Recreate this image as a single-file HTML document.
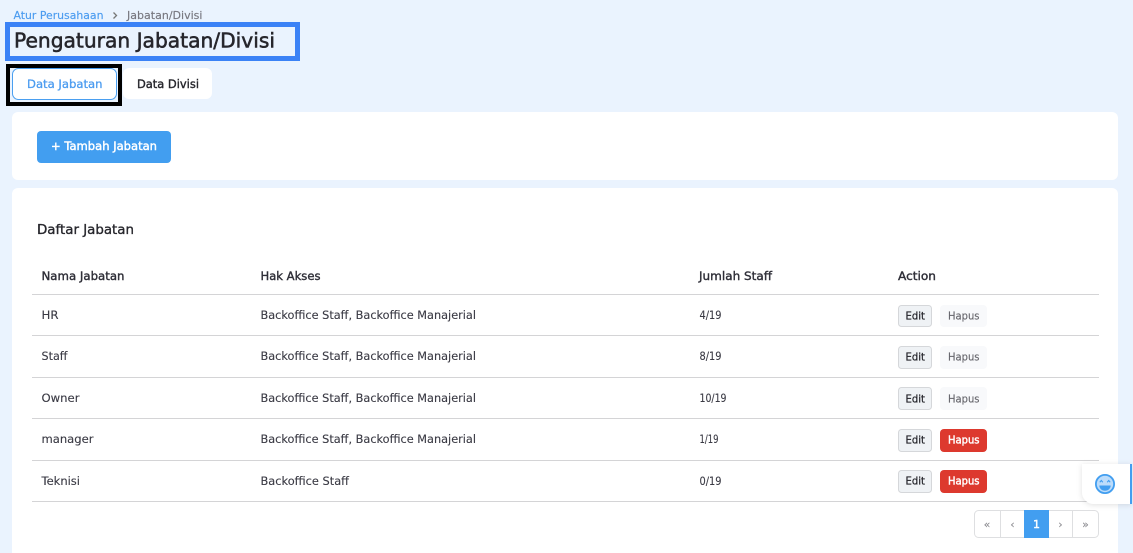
<!DOCTYPE html>
<html><head><meta charset="utf-8"><style>
html,body{margin:0;padding:0;width:1133px;height:553px;overflow:hidden;background:#eaf3fe}
svg{display:block}
text{font-family:"DejaVu Sans","Liberation Sans",sans-serif;font-size:11.5px;fill:#3a3a44;stroke:#3a3a44;stroke-width:.12px}
.h{fill:#2f2f38;stroke:#2f2f38;stroke-width:.38px;font-size:11.5px}
.w{fill:#fff;stroke:#fff;stroke-width:.42px;font-size:11.5px}
.b{fill:#4c9cf0;stroke:#4c9cf0;stroke-width:.3px;font-size:11.5px}
.g{font-size:10.5px;fill:#66666c;stroke:#66666c;stroke-width:.15px}
.e{font-size:11px;fill:#26262c;stroke:#26262c;stroke-width:.25px}
.p{font-size:11px;fill:#8b8b90;stroke:#8b8b90;stroke-width:.1px}
</style></head><body>
<svg width="1133" height="553" viewBox="0 0 1133 553" xmlns="http://www.w3.org/2000/svg">
<defs><filter id="s" x="-30%" y="-30%" width="160%" height="160%"><feDropShadow dx="0" dy="1" stdDeviation="3" flood-color="#000" flood-opacity=".12"/></filter></defs>
<rect width="1133" height="553" fill="#eaf3fe"/>
<text x="13.500" y="19" style="font-size:10.500px;fill:#4c9cf0;stroke:#4c9cf0;stroke-width:.15px" textLength="90" lengthAdjust="spacingAndGlyphs">Atur Perusahaan</text>
<path d="M113.500 12.500l3 3-3 3" fill="none" stroke="#777" stroke-width="1.300"/>
<text x="127" y="19" style="font-size:10.500px;fill:#77777f;stroke:#77777f;stroke-width:.15px" textLength="75.500" lengthAdjust="spacingAndGlyphs">Jabatan/Divisi</text>
<rect x="7.500" y="24.500" width="290" height="34" fill="none" stroke="#3b82f6" stroke-width="5"/>
<text x="14" y="47.500" style="font-size:20.500px;fill:#26262c;stroke:#26262c;stroke-width:.55px" textLength="261" lengthAdjust="spacingAndGlyphs">Pengaturan Jabatan/Divisi</text>
<rect x="8" y="66" width="112" height="38" fill="none" stroke="#000" stroke-width="4"/>
<rect x="12.500" y="68.500" width="104" height="31" rx="6" fill="#fff" stroke="#4a9ff0"/>
<text x="27" y="88" class="b" textLength="75.500" lengthAdjust="spacingAndGlyphs">Data Jabatan</text>
<rect x="123" y="68" width="89" height="31" rx="6" fill="#fff"/>
<text x="137" y="88" class="h" style="fill:#26262c;stroke:#26262c" textLength="62" lengthAdjust="spacingAndGlyphs">Data Divisi</text>
<rect x="12" y="112" width="1106" height="68" rx="6" fill="#fff"/>
<rect x="37" y="131" width="134" height="32" rx="4" fill="#429ef0"/>
<text x="51" y="150" class="w" textLength="106" lengthAdjust="spacingAndGlyphs">+ Tambah Jabatan</text>
<rect x="12" y="188" width="1106" height="380" rx="6" fill="#fff"/>
<text x="37" y="234" style="font-size:13.500px;fill:#26262c;stroke:#26262c;stroke-width:.35px" textLength="97" lengthAdjust="spacingAndGlyphs">Daftar Jabatan</text>
<g>
<text x="41.500" y="280" class="h" textLength="83" lengthAdjust="spacingAndGlyphs">Nama Jabatan</text>
<text x="260.500" y="280" class="h" textLength="60" lengthAdjust="spacingAndGlyphs">Hak Akses</text>
<text x="699" y="280" class="h" textLength="73" lengthAdjust="spacingAndGlyphs">Jumlah Staff</text>
<text x="898" y="280" class="h" textLength="38" lengthAdjust="spacingAndGlyphs">Action</text>
</g>
<g stroke="#d4d4d6" stroke-width="1">
<path d="M32 294.500H1099M32 335.500H1099M32 377.500H1099M32 418.500H1099M32 460.500H1099M32 501.500H1099"/>
</g>
<text x="41.500" y="319" textLength="17" lengthAdjust="spacingAndGlyphs">HR</text>
<text x="260.500" y="319" textLength="215.500" lengthAdjust="spacingAndGlyphs">Backoffice Staff, Backoffice Manajerial</text>
<text x="699.500" y="319" textLength="22" lengthAdjust="spacingAndGlyphs">4/19</text>
<text x="41.500" y="360" textLength="26" lengthAdjust="spacingAndGlyphs">Staff</text>
<text x="260.500" y="360" textLength="215.500" lengthAdjust="spacingAndGlyphs">Backoffice Staff, Backoffice Manajerial</text>
<text x="699.500" y="360" textLength="22" lengthAdjust="spacingAndGlyphs">8/19</text>
<text x="41.500" y="402" textLength="38" lengthAdjust="spacingAndGlyphs">Owner</text>
<text x="260.500" y="402" textLength="215.500" lengthAdjust="spacingAndGlyphs">Backoffice Staff, Backoffice Manajerial</text>
<text x="699.500" y="402" textLength="27" lengthAdjust="spacingAndGlyphs">10/19</text>
<text x="41.500" y="443" textLength="52" lengthAdjust="spacingAndGlyphs">manager</text>
<text x="260.500" y="443" textLength="215.500" lengthAdjust="spacingAndGlyphs">Backoffice Staff, Backoffice Manajerial</text>
<text x="699.500" y="443" textLength="19" lengthAdjust="spacingAndGlyphs">1/19</text>
<text x="41.500" y="485" textLength="38.500" lengthAdjust="spacingAndGlyphs">Teknisi</text>
<text x="260.500" y="485" textLength="88.500" lengthAdjust="spacingAndGlyphs">Backoffice Staff</text>
<text x="699.500" y="485" textLength="22" lengthAdjust="spacingAndGlyphs">0/19</text>
<g fill="#eff2f5" stroke="#d5d7da">
<rect x="898.500" y="305.500" width="33" height="21" rx="3"/>
<rect x="898.500" y="346.500" width="33" height="22" rx="3"/>
<rect x="898.500" y="387.500" width="33" height="22" rx="3"/>
<rect x="898.500" y="429.500" width="33" height="22" rx="3"/>
<rect x="898.500" y="470.500" width="33" height="22" rx="3"/>
</g>
<text x="905.500" y="319.500" class="e" textLength="19.500" lengthAdjust="spacingAndGlyphs">Edit</text>
<text x="905.500" y="360.500" class="e" textLength="19.500" lengthAdjust="spacingAndGlyphs">Edit</text>
<text x="905.500" y="402.500" class="e" textLength="19.500" lengthAdjust="spacingAndGlyphs">Edit</text>
<text x="905.500" y="443.500" class="e" textLength="19.500" lengthAdjust="spacingAndGlyphs">Edit</text>
<text x="905.500" y="484.500" class="e" textLength="19.500" lengthAdjust="spacingAndGlyphs">Edit</text>
<g fill="#f8f9fb">
<rect x="940" y="305" width="47" height="22" rx="4"/>
<rect x="940" y="346" width="47" height="23" rx="4"/>
<rect x="940" y="387" width="47" height="23" rx="4"/>
</g>
<g fill="#dd392e">
<rect x="940" y="429" width="47" height="23" rx="4"/>
<rect x="940" y="470" width="47" height="23" rx="4"/>
</g>
<text x="948" y="319.500" class="g" textLength="31.500" lengthAdjust="spacingAndGlyphs">Hapus</text>
<text x="948" y="360.500" class="g" textLength="31.500" lengthAdjust="spacingAndGlyphs">Hapus</text>
<text x="948" y="402.500" class="g" textLength="31.500" lengthAdjust="spacingAndGlyphs">Hapus</text>
<text x="948" y="443.500" class="w" style="font-size:10.500px" textLength="31.500" lengthAdjust="spacingAndGlyphs">Hapus</text>
<text x="948" y="484.500" class="w" style="font-size:10.500px" textLength="31.500" lengthAdjust="spacingAndGlyphs">Hapus</text>
<rect x="974.500" y="510.500" width="124" height="27" rx="4" fill="#fff" stroke="#dedfe1"/>
<path d="M1000.500 511V537M1072.500 511V537" stroke="#dedfe1"/>
<rect x="1024" y="510" width="25" height="28" fill="#429ef0"/>
<text x="987" y="528" text-anchor="middle" class="p">«</text>
<text x="1012.500" y="528" text-anchor="middle" class="p">‹</text>
<text x="1036.500" y="528" text-anchor="middle" class="w" style="font-size:11px">1</text>
<text x="1060.500" y="528" text-anchor="middle" class="p">›</text>
<text x="1085.500" y="528" text-anchor="middle" class="p">»</text>
<path d="M1094 464H1132V504H1094A12 12 0 0 1 1082 492V464Z" fill="#fff" filter="url(#s)"/>
<rect x="1130" y="464" width="2" height="40" fill="#429ef0"/>
<circle cx="1105" cy="484" r="9.100" fill="#bcdcfb" stroke="#429ef0" stroke-width="1.800"/>
<path d="M1099.300 485.500H1110.700C1110.500 489 1108 490.700 1105 490.700C1102 490.700 1099.500 489 1099.300 485.500Z" fill="#429ef0"/>
<path d="M1099.800 482.200l1.500-1.700 1.500 1.700M1107.200 482.200l1.500-1.700 1.500 1.700" fill="none" stroke="#429ef0" stroke-width="1.100"/>
</svg>
</body></html>
